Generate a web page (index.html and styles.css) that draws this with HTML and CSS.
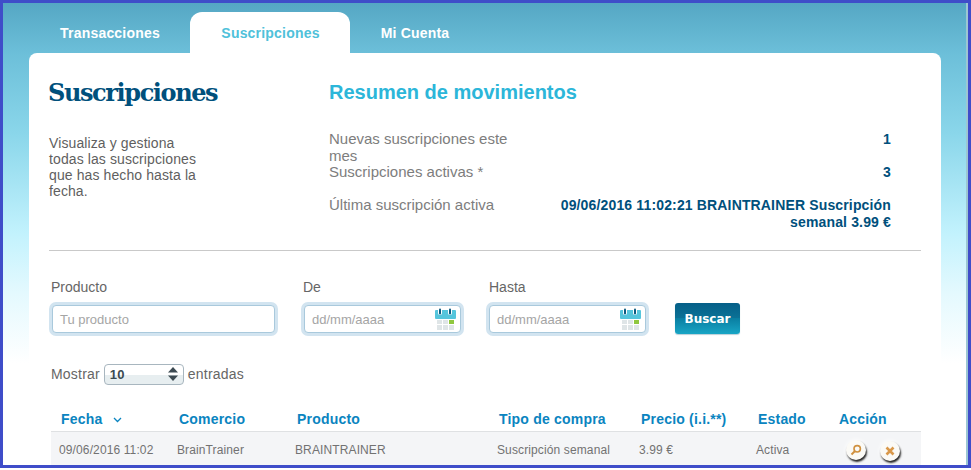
FILE: index.html
```html
<!DOCTYPE html>
<html lang="es">
<head>
<meta charset="utf-8">
<title>Suscripciones</title>
<link rel="stylesheet" href="styles.css">
</head>
<body>
<div class="frame">
  <div class="page">
    <nav class="tabs">
      <a class="tab tab-first">Transacciones</a>
      <a class="tab tab-active">Suscripciones</a>
      <a class="tab tab-last">Mi Cuenta</a>
    </nav>
    <main class="card">
      <section class="top">
        <div class="intro">
          <h1>Suscripciones</h1>
          <p>Visualiza y gestiona todas las suscripciones que has hecho hasta la fecha.</p>
        </div>
        <div class="summary">
          <h2>Resumen de movimientos</h2>
          <div class="sum-row"><span class="sum-label">Nuevas suscripciones este mes</span><strong>1</strong></div>
          <div class="sum-row"><span class="sum-label">Suscripciones activas *</span><strong>3</strong></div>
          <div class="sum-row sum-last"><span class="sum-label">Última suscripción activa</span><strong>09/06/2016 11:02:21 BRAINTRAINER Suscripción semanal 3.99 €</strong></div>
        </div>
      </section>
      <form class="filters">
        <div class="field field-product">
          <label>Producto</label>
          <div class="input"><span class="ph">Tu producto</span></div>
        </div>
        <div class="field field-date">
          <label>De</label>
          <div class="input"><span class="ph">dd/mm/aaaa</span>
            <svg class="cal" width="21" height="22" viewBox="0 0 21 22"><rect x="0" y="2" width="21" height="9" rx="1" fill="#55c5dc"/><rect x="3" y="0" width="4" height="7" rx="2" fill="#fff"/><rect x="4" y="0.500" width="2" height="6" rx="1" fill="#0b5a80"/><rect x="13" y="0" width="4" height="7" rx="2" fill="#fff"/><rect x="14" y="0.500" width="2" height="6" rx="1" fill="#0b5a80"/><g fill="#dfe5e7"><rect x="2" y="12" width="5" height="4"/><rect x="8" y="12" width="5" height="4"/><rect x="2" y="17" width="5" height="5"/><rect x="8" y="17" width="5" height="5"/><rect x="14" y="17" width="5" height="5"/></g><rect x="14" y="12" width="5" height="4" fill="#8fc73e"/></svg>
          </div>
        </div>
        <div class="field field-date field-end">
          <label>Hasta</label>
          <div class="input"><span class="ph">dd/mm/aaaa</span>
            <svg class="cal" width="21" height="22" viewBox="0 0 21 22"><rect x="0" y="2" width="21" height="9" rx="1" fill="#55c5dc"/><rect x="3" y="0" width="4" height="7" rx="2" fill="#fff"/><rect x="4" y="0.500" width="2" height="6" rx="1" fill="#0b5a80"/><rect x="13" y="0" width="4" height="7" rx="2" fill="#fff"/><rect x="14" y="0.500" width="2" height="6" rx="1" fill="#0b5a80"/><g fill="#dfe5e7"><rect x="2" y="12" width="5" height="4"/><rect x="8" y="12" width="5" height="4"/><rect x="2" y="17" width="5" height="5"/><rect x="8" y="17" width="5" height="5"/><rect x="14" y="17" width="5" height="5"/></g><rect x="14" y="12" width="5" height="4" fill="#8fc73e"/></svg>
          </div>
        </div>
        <button class="search" type="button">Buscar</button>
      </form>
      <div class="length">
        <span>Mostrar</span>
        <div class="select"><b>10</b>
          <svg width="10" height="14" viewBox="0 0 10 14"><path d="M5 0l5 5.500H0z" fill="#3c4a52"/><path d="M5 14l5-5.500H0z" fill="#3c4a52"/></svg>
        </div>
        <span>entradas</span>
      </div>
      <table class="grid">
        <colgroup><col class="c1"><col class="c2"><col class="c3"><col class="c4"><col class="c5"><col class="c6"><col></colgroup>
        <thead>
          <tr>
            <th>Fecha <svg class="sort" width="9" height="6" viewBox="0 0 9 6"><path d="M1 1l3.500 3.500L8 1" fill="none" stroke="#0a84c0" stroke-width="1.300"/></svg></th>
            <th>Comercio</th><th>Producto</th><th>Tipo de compra</th><th>Precio (i.i.**)</th><th>Estado</th><th>Acción</th>
          </tr>
        </thead>
        <tbody>
          <tr>
            <td>09/06/2016 11:02</td><td>BrainTrainer</td><td>BRAINTRAINER</td><td>Suscripción semanal</td><td>3.99 €</td><td>Activa</td>
            <td class="actions">
              <span class="round"><svg width="12" height="12" viewBox="0 0 12 12"><circle cx="7.200" cy="4.800" r="3.200" fill="none" stroke="#d0913f" stroke-width="1.600"/><path d="M5 7L1.500 10.500" stroke="#d0913f" stroke-width="2"/></svg></span>
              <span class="round"><svg width="10" height="10" viewBox="0 0 10 10"><path d="M1.500 1.500l7 7M8.500 1.500l-7 7" stroke="#d9984a" stroke-width="2.600"/></svg></span>
            </td>
          </tr>
        </tbody>
      </table>
    </main>
  </div>
</div>
</body>
</html>
```

FILE: styles.css
```css
* { box-sizing: border-box; }
html, body { margin: 0; padding: 0; background: #fff; }
body { font-family: "Liberation Sans", Arial, sans-serif; color: #666; font-size: 14px; }
.frame {
  width: 971px;
  height: 468px;
  border: 3px solid #3f4dc9;
  overflow: hidden;
  background: linear-gradient(#55a7c4 0, #6cbfd9 50px, #8ad6ea 130px, #c2f2fd 230px, #e4f9fe 290px, #fff 360px, #fff 100%);
}
.page {
  height: 100%;
  padding: 9px 24px 0 26px;
  border-right: 2px solid #9cc6d3;
}
.tabs { display: flex; height: 41px; }
.tab {
  display: block;
  font-weight: bold;
  font-size: 14px;
  line-height: 42px;
  letter-spacing: 0.2px;
  color: #fff;
  text-align: center;
}
.tab-first { width: 162px; }
.tab-active {
  width: 160px;
  margin-left: -1px;
  padding-left: 1px;
  background: #fff;
  color: #4fc1da;
  border-radius: 12px 12px 0 0;
}
.tab-last { width: 130px; }
.card {
  width: 912px;
  height: 500px;
  background: #fff;
  border-radius: 8px 8px 0 0;
  padding: 0 20px;
}
.top {
  display: flex;
  height: 198px;
  border-bottom: 1px solid #c9c9c9;
}
.intro { width: 280px; }
h1 {
  margin: 0 0 0 -1px;
  padding-top: 25px;
  font-family: "DejaVu Serif", serif;
  font-weight: bold;
  font-size: 24px;
  line-height: 30px;
  letter-spacing: -1.4px;
  color: #00507c;
}
.intro p {
  margin: 27px 0 0;
  width: 155px;
  line-height: 16px;
  letter-spacing: 0.1px;
  color: #5f5f5f;
}
.summary { width: 562px; }
h2 {
  margin: 0;
  padding-top: 26px;
  font-size: 20px;
  line-height: 26px;
  color: #2cb6d9;
  margin-bottom: 26.400px;
}
.sum-row {
  display: flex;
  justify-content: space-between;
  line-height: 16.500px;
  font-size: 15px;
  color: #7d7d7d;
}
.sum-label { width: 190px; flex: none; }
.sum-row strong { font-size: 14px; color: #00507c; text-align: right; letter-spacing: 0.15px; width: 345px; }
.sum-last { margin-top: 16.500px; }
.filters {
  display: flex;
  align-items: flex-start;
  padding: 28px 0 0 2px;
}
.field label { display: block; line-height: 16px; margin-bottom: 10px; color: #666; }
.field-product { width: 252px; }
.field-date { width: 186px; }
.input {
  display: flex;
  align-items: center;
  justify-content: space-between;
  height: 28px;
  margin-left: 1px;
  background: #fff;
  border: 1px solid #a9c9dc;
  border-radius: 4px;
  box-shadow: 0 0 0 3px #d2e4f0;
  padding: 0 4px 0 7px;
}
.field-end .input { margin-left: 0; }
.field-product .input { width: 223px; }
.field-date .input { width: 157px; }
.ph { font-size: 13px; color: #a5a5a5; }
.search {
  width: 65px;
  height: 31px;
  margin-top: 24px;
  border: 0;
  border-radius: 3px;
  padding: 0;
  font-family: "DejaVu Sans", sans-serif;
  font-weight: bold;
  font-size: 12px;
  color: #fff;
  background: linear-gradient(#055f88 0, #0b7296 50%, #0a7fa2 50%, #18a5c5 100%);
  box-shadow: 0 1px 1px #b9cfd8;
}
.length {
  display: flex;
  align-items: center;
  gap: 4px;
  margin-top: 29px;
  padding-left: 2px;
  height: 22px;
  letter-spacing: 0.2px;
}
.select {
  display: flex;
  align-items: center;
  justify-content: space-between;
  width: 80px;
  height: 21px;
  padding: 0 5px 0 5px;
  border: 1px solid #a8b6bf;
  border-radius: 4px;
  background: linear-gradient(#fff 0, #fff 50%, #e7eef0 50%, #e7eef0 100%);
  color: #3b4a52;
  font-size: 14px;
}
.select b { font-size: 13px; }
.grid {
  width: 870px;
  margin: 23px 0 0 2px;
  border-collapse: collapse;
  table-layout: fixed;
}
.c1, .c2 { width: 118px; }
.c3 { width: 202px; }
.c4 { width: 142px; }
.c5 { width: 117px; }
.c6 { width: 81px; }
th {
  height: 23px;
  padding: 0 0 0 10px;
  text-align: left;
  font-size: 14px;
  letter-spacing: 0.2px;
  color: #0a84c0;
  border-bottom: 1px solid #dfe1e3;
  white-space: nowrap;
}
.sort { margin-left: 6px; vertical-align: 1px; }
td {
  height: 38px;
  padding: 0 0 0 8px;
  font-size: 12px;
  letter-spacing: 0.12px;
  color: #727272;
  background: #f4f5f7;
  vertical-align: middle;
  white-space: nowrap;
}
.actions { padding-left: 17px; }
.round {
  display: inline-flex;
  align-items: center;
  justify-content: center;
  width: 20px;
  height: 20px;
  margin-right: 11px;
  border-radius: 50%;
  background: #fbfaf6;
  box-shadow: 1px 2px 2px #222, 0 0 5px #fff;
}
```
